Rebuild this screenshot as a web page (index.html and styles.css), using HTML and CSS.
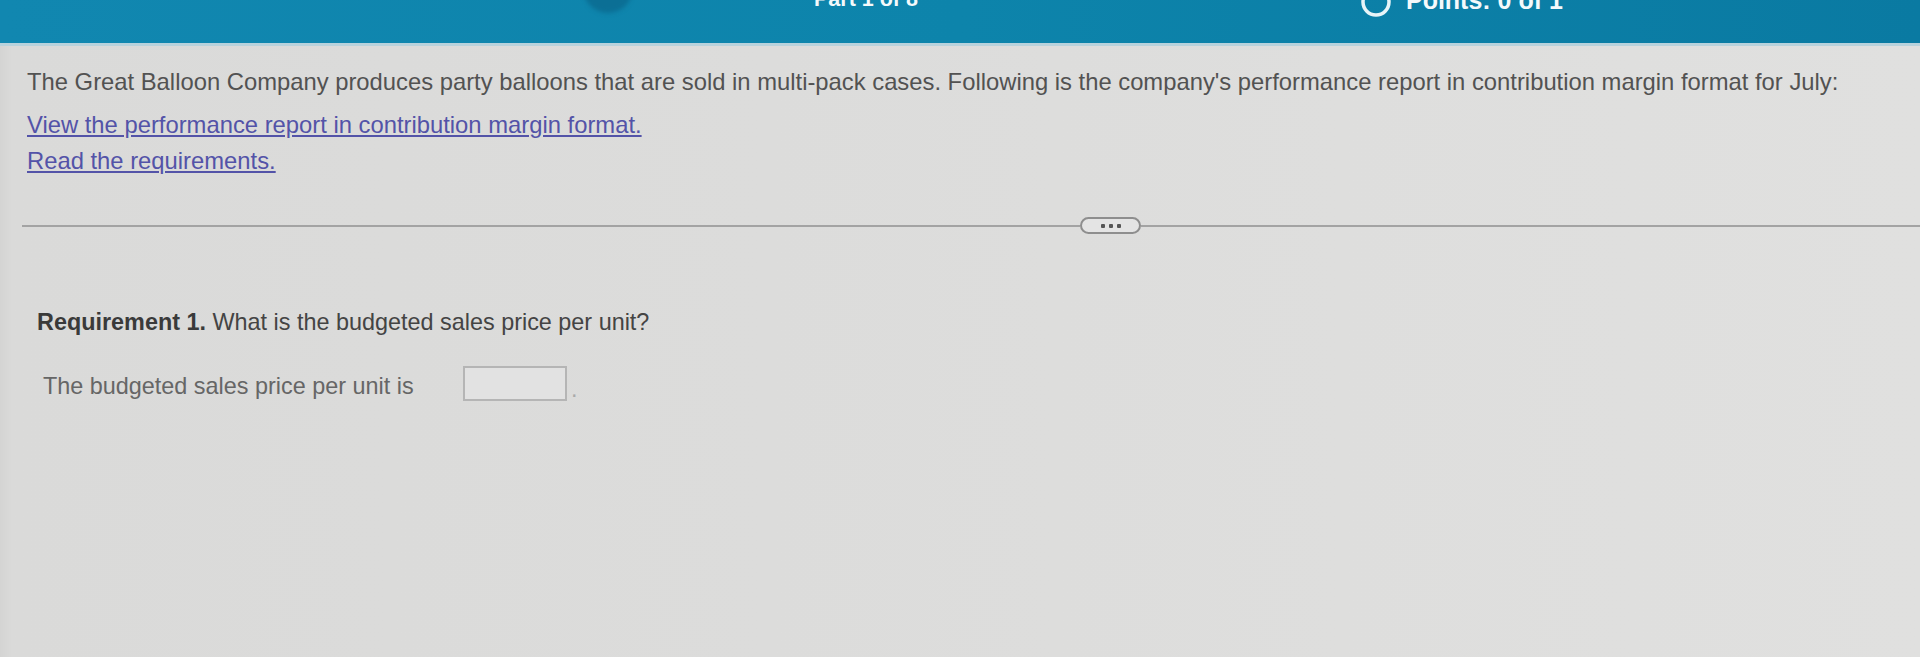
FILE: index.html
```html
<!DOCTYPE html>
<html>
<head>
<meta charset="utf-8">
<link rel="stylesheet" href="styles.css">
</head>
<body>
<header class="topbar">
  <div class="knob"></div>
  <div class="part">Part 1 of 8</div>
  <div class="points">
    <svg class="ring" width="32" height="32" viewBox="0 0 32 32"><circle cx="16" cy="16" r="13" fill="none" stroke="#e8f4f8" stroke-width="3.5"/></svg>
    <span>Points: 0 of 1</span>
  </div>
</header>
<main class="content">
  <section class="intro">
    <p class="lead">The Great Balloon Company produces party balloons that are sold in multi-pack cases. Following is the company's performance report in contribution margin format for July:</p>
    <p class="linkline"><a href="#">View the performance report in contribution margin format.</a></p>
    <p class="linkline second"><a href="#">Read the requirements.</a></p>
  </section>
  <div class="divider">
    <span class="rule left"></span>
    <span class="pill"><i></i><i></i><i></i></span>
    <span class="rule"></span>
  </div>
  <section class="question">
    <p class="req"><b>Requirement 1.</b> What is the budgeted sales price per unit?</p>
    <div class="answer">
      <span class="label">The budgeted sales price per unit is</span>
      <span class="box"></span>
      <span class="dot">.</span>
    </div>
  </section>
</main>
</body>
</html>
```
FILE: styles.css
```css
* { box-sizing: border-box; }
html, body { margin: 0; padding: 0; }
body {
  width: 1920px;
  height: 657px;
  overflow: hidden;
  font-family: "Liberation Sans", Arial, sans-serif;
  background: linear-gradient(90deg, #d4d4d3 0px, #dadad9 12px, #dcdcdb 40%, #e0e0df 100%);
  color: #4c4c4c;
}
.topbar {
  height: 46px;
  background: linear-gradient(90deg, #1187b0 0%, #0d84ab 50%, #0a7aa2 100%);
  border-bottom: 3px solid #b8d2dc;
  display: flex;
  align-items: flex-start;
  overflow: hidden;
}
.knob {
  width: 50px;
  height: 50px;
  border-radius: 50%;
  background: #0b6f95;
  margin: -37px 0 0 583px;
  filter: blur(2px);
}
.part {
  color: #f4f9fb;
  font-weight: bold;
  font-size: 21.5px;
  margin: -13px 0 0 181px;
  line-height: 24px;
}
.points {
  display: flex;
  align-items: center;
  gap: 14px;
  margin: -14px 0 0 442px;
  color: #f4f9fb;
  font-weight: bold;
  font-size: 25px;
}
.points span { margin-top: -4px; }
.ring { display: block; }
.intro { padding: 22px 0 0 27px; }
.intro p { margin: 0; font-size: 23.8px; line-height: 28px; }
.lead { color: #525252; }
.linkline { margin-top: 15px !important; }
.linkline.second { margin-top: 8px !important; }
.linkline a { color: #5353a8; text-decoration: underline; }
.divider {
  display: flex;
  align-items: center;
  margin: 42px 0 0 22px;
}
.rule { flex: 1; height: 2px; background: #a3a3a3; }
.rule.left { flex: 0 0 1058px; }
.pill {
  width: 61px;
  height: 17px;
  border: 2px solid #8e8e8e;
  border-radius: 9px;
  background: #e4e4e4;
  display: flex;
  justify-content: center;
  align-items: center;
  gap: 4px;
}
.pill i { width: 4px; height: 4px; background: #555; border-radius: 1px; }
.question { padding: 74px 0 0 37px; }
.req { margin: 0; font-size: 23.4px; line-height: 28px; color: #444; }
.req b { color: #3a3a3a; }
.answer {
  display: flex;
  align-items: center;
  margin: 28px 0 0 6px;
  font-size: 23.4px;
  color: #666;
}
.label { width: 420px; margin-top: 6px; }
.box {
  width: 104px;
  height: 35px;
  border: 2px solid #b5b5b5;
  background: #e2e2e2;
}
.dot { color: #aaa; margin-left: 4px; margin-top: 12px; }
```
